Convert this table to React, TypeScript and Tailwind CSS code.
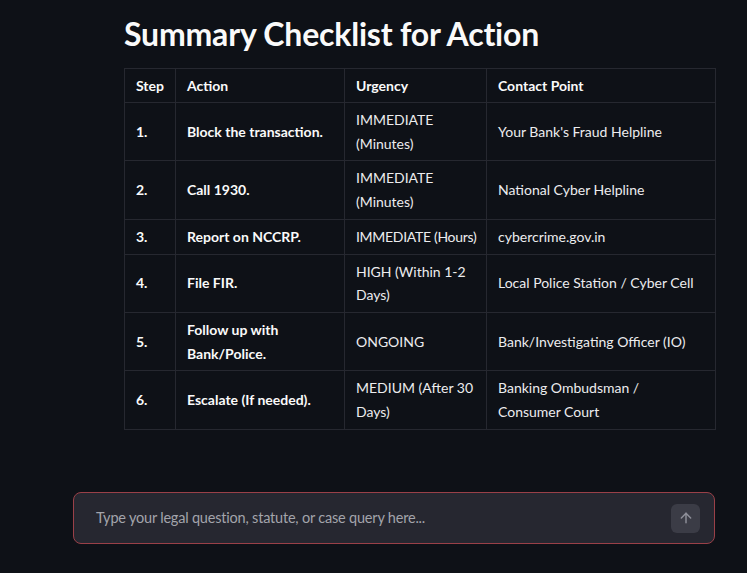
import React from "react";

const rows: { step: string; action: string; urgency: string; contact: string; nowrap?: boolean }[] = [
  { step: "1.", action: "Block the transaction.", urgency: "IMMEDIATE (Minutes)", contact: "Your Bank's Fraud Helpline" },
  { step: "2.", action: "Call 1930.", urgency: "IMMEDIATE (Minutes)", contact: "National Cyber Helpline" },
  { step: "3.", action: "Report on NCCRP.", urgency: "IMMEDIATE (Hours)", contact: "cybercrime.gov.in", nowrap: true },
  { step: "4.", action: "File FIR.", urgency: "HIGH (Within 1-2 Days)", contact: "Local Police Station / Cyber Cell" },
  { step: "5.", action: "Follow up with Bank/Police.", urgency: "ONGOING", contact: "Bank/Investigating Officer (IO)" },
  { step: "6.", action: "Escalate (If needed).", urgency: "MEDIUM (After 30 Days)", contact: "Banking Ombudsman / Consumer Court" },
];

export default function App() {
  return (
    <div
      className="w-[747px] h-[573px] bg-[#0e1117] text-[#fafafa] flex flex-col overflow-hidden"
      style={{ fontFamily: "Lato, 'Noto Sans', sans-serif" }}
    >
      <div className="pl-[124px] pr-[32px] pt-[14px]">
        <h2 className="text-[32px] leading-[40px] font-bold tracking-[-0.2px]">Summary Checklist for Action</h2>
        <table className="mt-[14px] w-[591px] table-fixed border-collapse text-[14px] leading-[23.7px]">
          <colgroup>
            <col className="w-[51px]" />
            <col className="w-[169px]" />
            <col className="w-[142px]" />
            <col className="w-[229px]" />
          </colgroup>
          <thead>
            <tr className="h-[34px]">
              <th className="border border-[#262830] px-[11px] py-[4px] text-left font-bold">Step</th>
              <th className="border border-[#262830] px-[11px] py-[4px] text-left font-bold">Action</th>
              <th className="border border-[#262830] px-[11px] py-[4px] text-left font-bold">Urgency</th>
              <th className="border border-[#262830] px-[11px] py-[4px] text-left font-bold">Contact Point</th>
            </tr>
          </thead>
          <tbody>
            {rows.map((r) => (
              <tr key={r.step}>
                <td className="border border-[#262830] px-[11px] py-[5px] font-bold align-middle">{r.step}</td>
                <td className="border border-[#262830] px-[11px] py-[5px] font-bold align-middle">{r.action}</td>
                <td
                  className={
                    r.nowrap
                      ? "border border-[#262830] pl-[11px] pr-[2px] py-[5px] align-middle text-[#ececee] whitespace-nowrap tracking-[-0.3px]"
                      : "border border-[#262830] px-[11px] py-[5px] align-middle text-[#ececee]"
                  }
                >
                  {r.urgency}
                </td>
                <td className="border border-[#262830] px-[11px] py-[5px] align-middle text-[#ececee]">{r.contact}</td>
              </tr>
            ))}
          </tbody>
        </table>
      </div>
      <div className="mt-auto pl-[73px] pr-[32px] pb-[29px]">
        <div className="h-[52px] rounded-[8px] border border-[#9a4048] bg-[#262730] flex items-center pl-[22px] pr-[14px]">
          <span className="flex-1 text-[14.5px] tracking-[-0.2px] text-[#a3a4ab]">
            Type your legal question, statute, or case query here...
          </span>
          <div className="w-[29px] h-[29px] rounded-[6px] bg-[#3b3c46] flex items-center justify-center">
            <svg width="16" height="16" viewBox="0 0 24 24" fill="none" stroke="#8e8f99" strokeWidth="2.2" strokeLinecap="round" strokeLinejoin="round">
              <path d="M12 19V5" />
              <path d="M5 12l7-7 7 7" />
            </svg>
          </div>
        </div>
      </div>
    </div>
  );
}
